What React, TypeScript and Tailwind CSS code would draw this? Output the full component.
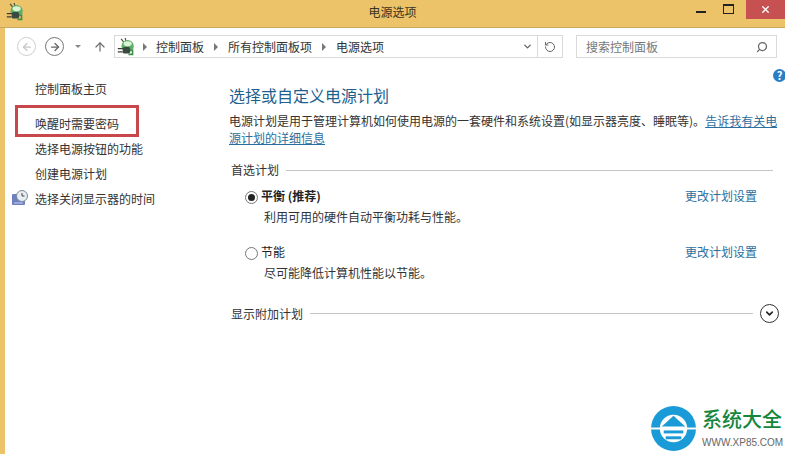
import { ArrowLeft, ArrowRight, ArrowUp, ChevronDown, RotateCw, Search, X } from 'lucide-react';

const font = { fontFamily: '"Noto Sans CJK SC", "Liberation Sans", sans-serif' };

function PowerIcon({ size = 22 }: { size?: number }) {
  return (
    <svg width={size} height={size} viewBox="0 0 22 22">
      <path d="M5 1l4 5M10 0l1 5" stroke="#4a4a3a" strokeWidth="1.4" fill="none" />
      <circle cx="13" cy="10" r="7.5" fill="#5fae6a" />
      <ellipse cx="13" cy="7" rx="5" ry="3" fill="#dcf3d6" />
      <rect x="7" y="11" width="9" height="8" rx="2" fill="#3a4a40" />
      <path d="M1 13h6M1 17h6" stroke="#3c3c3c" strokeWidth="1.5" />
      <path d="M16 15h3v5h-5" stroke="#3f8f4c" strokeWidth="2" fill="none" />
    </svg>
  );
}

function SideLink({ label, icon }: { label: string; icon?: boolean }) {
  return (
    <div className="relative h-[25px] flex items-center pl-[30px] text-[12px] text-[#333]">
      {icon && (
        <svg className="absolute left-[7px] top-[4px]" width="17" height="16" viewBox="0 0 17 16">
          <rect x="0" y="4" width="13" height="11" rx="1" fill="#6f7fc0" />
          <rect x="2" y="12" width="9" height="2" fill="#9aa6dc" />
          <circle cx="10" cy="6" r="5.5" fill="#e8eef4" stroke="#7a8a96" />
          <path d="M10 3v3h2.5" stroke="#444" fill="none" />
        </svg>
      )}
      {label}
    </div>
  );
}

function Plan({ title, desc, active }: { title: string; desc: string; active?: boolean }) {
  return (
    <div className="pl-[16px] pr-[16px]">
      <div className="flex items-center h-[20px]">
        <span className="w-[13px] h-[13px] mt-[3px] rounded-full border border-[#777] bg-white flex items-center justify-center">
          {active && <span className="w-[7px] h-[7px] rounded-full bg-[#222]" />}
        </span>
        <span className={`ml-[3px] text-[12px] text-[#222] ${active ? 'font-bold' : ''}`}>{title}</span>
        <span className="ml-auto text-[12px] text-[#2a6f9e]">更改计划设置</span>
      </div>
      <div className="pl-[19px] mt-[1px] h-[20px] leading-[20px] text-[12px] text-[#333]">{desc}</div>
    </div>
  );
}

function Divider({ label, width }: { label: string; width: string }) {
  return (
    <div className="flex items-center h-[18px] pl-[2px]">
      <span className={`text-[12px] text-[#333] ${width}`}>{label}</span>
      <div className="flex-1 h-px bg-[#c4c4c4]" />
    </div>
  );
}

export default function App() {
  return (
    <div className="relative w-[785px] h-[454px] overflow-hidden bg-[#edc369]" style={font}>
      {/* title bar */}
      <div className="relative h-[28px] flex items-center justify-center border-b border-[#c9a860] text-[12px] text-[#3a3320]">
        <div className="absolute left-[6px] top-[3px]">
          <PowerIcon size={18} />
        </div>
        <span className="-mt-[3px]">电源选项</span>
        <div className="absolute right-0 top-0 h-[19px] flex items-start">
          <div className="w-[10px] h-[2px] bg-[#222] mt-[11px] mr-[17px]" />
          <div className="w-[11px] h-[10px] border border-[#222] border-t-2 mt-[4px] mr-[12px]" />
          <div className="w-[39px] h-[19px] bg-[#c75050] flex items-center justify-center">
            <X size={11} strokeWidth={3} className="text-white" />
          </div>
        </div>
      </div>

      <div className="ml-[5px] h-[426px] bg-white flex flex-col">
        {/* toolbar */}
        <div className="h-[37px] flex items-center text-[#555] shrink-0">
          <span className="ml-[12px] w-[19px] h-[19px] rounded-full border border-[#cfcfcf] flex items-center justify-center">
            <ArrowLeft size={12} strokeWidth={2.5} className="text-[#c8c8c8]" />
          </span>
          <span className="ml-[9px] w-[19px] h-[19px] rounded-full border border-[#777] flex items-center justify-center">
            <ArrowRight size={12} strokeWidth={2.5} className="text-[#666]" />
          </span>
          <span className="ml-[11px] w-0 h-0 border-x-[3px] border-x-transparent border-t-[3px] border-t-[#888]" />
          <ArrowUp size={14} strokeWidth={2} className="ml-[12px] text-[#666]" />
          <div className="ml-[7px] w-[449px] h-[23px] border border-[#d9d9d9] flex items-center text-[12px] text-[#333]">
            <span className="ml-[2px]">
              <PowerIcon size={18} />
            </span>
            <span className="ml-[8px] w-0 h-0 border-y-[4px] border-y-transparent border-l-[4px] border-l-[#777]" />
            <span className="ml-[9px]">控制面板</span>
            <span className="ml-[10px] w-0 h-0 border-y-[4px] border-y-transparent border-l-[4px] border-l-[#777]" />
            <span className="ml-[10px]">所有控制面板项</span>
            <span className="ml-[10px] w-0 h-0 border-y-[4px] border-y-transparent border-l-[4px] border-l-[#777]" />
            <span className="ml-[10px]">电源选项</span>
            <ChevronDown size={11} strokeWidth={3} className="ml-auto mr-[4px] text-[#666]" />
            <div className="w-[25px] h-full border-l border-[#d9d9d9] flex items-center justify-center">
              <RotateCw size={12} strokeWidth={2} className="text-[#666] -scale-x-100" />
            </div>
          </div>
          <div className="ml-[13px] w-[201px] h-[23px] border border-[#d9d9d9] flex items-center pl-[9px] pr-[8px] text-[12px] text-[#777]">
            搜索控制面板
            <Search size={12} strokeWidth={2.5} className="ml-auto text-[#666] -scale-x-100" />
          </div>
        </div>

        <div className="flex flex-1 relative">
          {/* sidebar */}
          <div className="w-[224px] shrink-0 pt-[11px]">
            <SideLink label="控制面板主页" />
            <div className="h-[10px]" />
            <SideLink label="唤醒时需要密码" />
            <SideLink label="选择电源按钮的功能" />
            <SideLink label="创建电源计划" />
            <SideLink label="选择关闭显示器的时间" icon />
          </div>

          {/* main */}
          <div className="flex-1 min-w-0 pr-[12px] pt-[19px]">
            <div className="h-[22px] leading-[22px] text-[16px] text-[#1d5f8f]">选择或自定义电源计划</div>
            <div className="mt-[6px] w-[549px] text-[12px] leading-[17px] text-[#333]">
              电源计划是用于管理计算机如何使用电源的一套硬件和系统设置(如显示器亮度、睡眠等)。
              <span className="text-[#2a6f9e] underline">告诉我有关电源计划的详细信息</span>
            </div>
            <div className="mt-[15px]">
              <Divider label="首选计划" width="w-[55px]" />
            </div>
            <div className="mt-[7px]">
              <Plan title="平衡 (推荐)" desc="利用可用的硬件自动平衡功耗与性能。" active />
            </div>
            <div className="mt-[15px]">
              <Plan title="节能" desc="尽可能降低计算机性能以节能。" />
            </div>
            <div className="mt-[21px] flex items-center">
              <div className="flex-1">
                <Divider label="显示附加计划" width="w-[79px]" />
              </div>
              <span className="w-[19px] h-[19px] ml-[7px] -mr-[6px] rounded-full border border-[#333] flex items-center justify-center shrink-0">
                <ChevronDown size={11} strokeWidth={3.5} className="text-[#222]" />
              </span>
            </div>
          </div>

          {/* help icon */}
          <span className="absolute left-[768px] top-[4px] w-[13px] h-[13px] rounded-full bg-[#2a7fc4] text-white text-[11px] font-bold leading-[13px] text-center">
            ?
          </span>
        </div>
      </div>

      {/* red annotation box */}
      <div className="absolute left-[15px] top-[105px] w-[124px] h-[32px] border-[3px] border-[#c8474a]" />

      {/* watermark */}
      <div className="absolute left-[651px] top-[406px] flex items-start">
        <svg width="45" height="45" viewBox="0 0 46 46">
          <circle cx="23" cy="23" r="23" fill="#1a9bd8" />
          <circle cx="23" cy="23" r="14" fill="#fff" />
          <path d="M23 10L11 21h24z" fill="#1a9bd8" />
          <rect x="13" y="25" width="20" height="3" fill="#1a9bd8" />
          <rect x="15" y="31" width="16" height="3" fill="#1a9bd8" />
          <rect x="0" y="22" width="46" height="2" fill="#fff" />
        </svg>
        <div className="ml-[6px] flex flex-col">
          <span className="text-[20px] leading-[26px] font-medium text-[#15863c] whitespace-nowrap">系统大全</span>
          <span className="text-[10px] leading-[12px] mt-[5px] text-[#666]" style={{ fontFamily: '"Liberation Sans", sans-serif' }}>
            WWW.XP85.COM
          </span>
        </div>
      </div>
    </div>
  );
}
